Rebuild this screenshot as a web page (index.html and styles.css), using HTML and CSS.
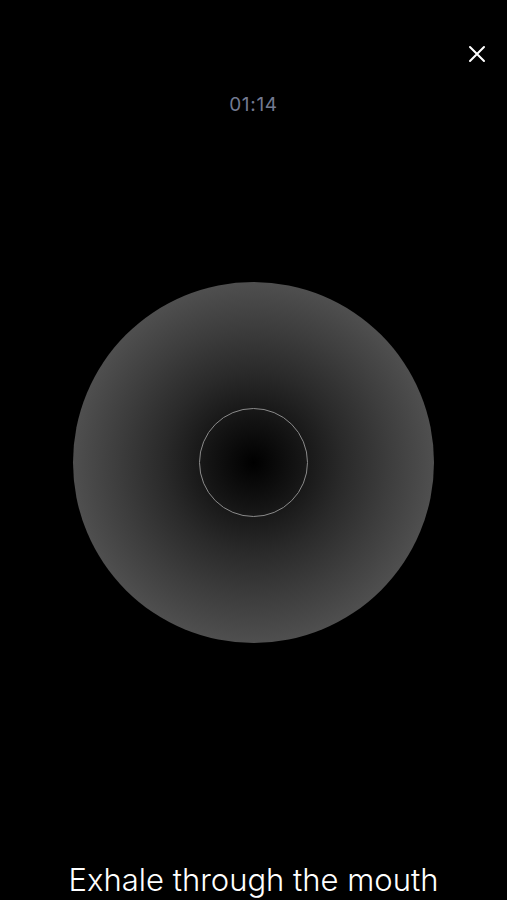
FILE: index.html
```html
<!DOCTYPE html>
<html>
<head>
<meta charset="utf-8">
<link rel="stylesheet" href="styles.css">
</head>
<body>
<div class="screen">
  <div class="topbar">
    <button class="close" aria-label="Close">
      <svg width="18" height="18" viewBox="0 0 18 18"><path d="M2 2 L16 16 M16 2 L2 16" stroke="#ffffff" stroke-width="2" stroke-linecap="round" fill="none"/></svg>
    </button>
  </div>
  <div class="timer">01:14</div>
  <div class="orb">
    <div class="core"></div>
  </div>
  <div class="instruction">Exhale through the mouth</div>
</div>
</body>
</html>
```
FILE: styles.css
```css
html, body {
  margin: 0;
  padding: 0;
  background: #000;
}
body {
  font-family: Inter, "Noto Sans", sans-serif;
}
.screen {
  width: 507px;
  height: 900px;
  overflow: hidden;
  display: flex;
  flex-direction: column;
  align-items: center;
}
.topbar {
  width: 100%;
  height: 70px;
  display: flex;
  justify-content: flex-end;
  align-items: flex-start;
  box-sizing: border-box;
  padding: 45px 21px 0 0;
}
.close {
  width: 18px;
  height: 18px;
  padding: 0;
  border: 0;
  background: none;
  display: flex;
}
.timer {
  margin-top: 24px;
  font-size: 19px;
  line-height: 22px;
  color: #737a91;
  letter-spacing: 0.7px;
}
.orb {
  margin-top: 166px;
  width: 361px;
  height: 361px;
  border-radius: 50%;
  background: radial-gradient(circle closest-side, #000 0%, #141414 25%, #2a2a2a 50%, #3d3d3d 75%, #4f4f4f 100%);
  display: flex;
  align-items: center;
  justify-content: center;
}
.core {
  width: 107px;
  height: 107px;
  border-radius: 50%;
  border: 1px solid #8a8a8a;
}
.instruction {
  margin-top: 217px;
  font-size: 31px;
  font-weight: 300;
  color: #fff;
  line-height: 40px;
  white-space: nowrap;
}
```
